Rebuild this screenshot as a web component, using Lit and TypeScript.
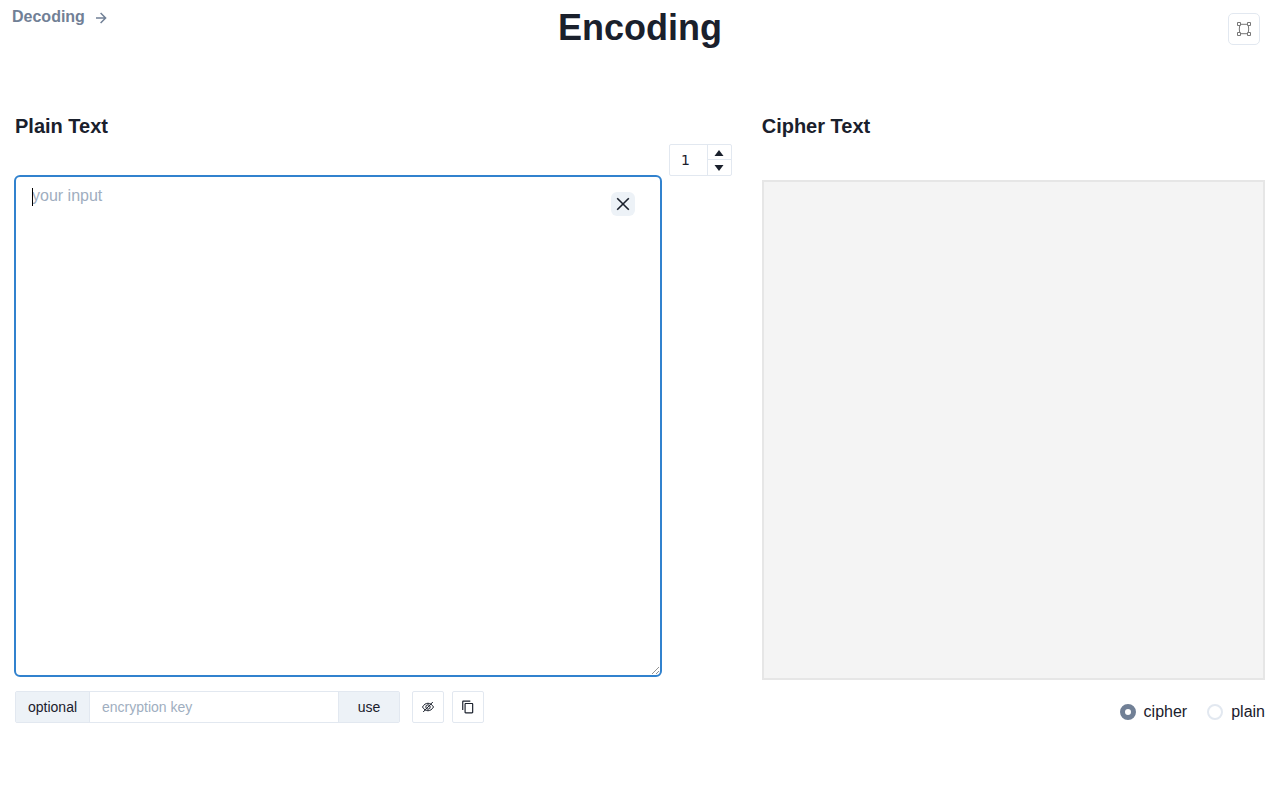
import { LitElement, html, css } from "lit";
import { customElement } from "lit/decorators.js";

@customElement("app-root")
export class AppRoot extends LitElement {
  static styles = css`
    :host {
      display: block;
      height: 800px;
      overflow: hidden;
      background: #fff;
      color: #1a202c;
      font: 16px/24px "Liberation Sans", Arial, sans-serif;
    }
    * { box-sizing: border-box; }
    svg { display: block; flex: none; }
    .header {
      display: grid;
      grid-template-columns: 1fr auto 1fr;
      align-items: start;
      height: 111px;
      padding: 5px 20px 0 12px;
    }
    .nav {
      display: flex;
      align-items: center;
      gap: 11px;
      color: #718096;
      font-weight: 700;
    }
    .nav svg { margin-top: 2px; }
    h1 { margin: 0 -4px 0 4px; font-size: 36px; line-height: 45px; }
    h2 { margin: 0; font-size: 20px; line-height: 30px; }
    .square {
      display: flex;
      align-items: center;
      justify-content: center;
      width: 32px;
      height: 32px;
      border: 1px solid #e2e8f0;
      background: #fff;
    }
    .full { justify-self: end; margin-top: 8px; border-radius: 5px; color: #777; }
    .main {
      display: grid;
      grid-template-columns: 717px 503.3px;
      gap: 29.7px;
      padding: 0 15px;
    }
    .stepper {
      display: grid;
      grid-template-columns: 37px 24px;
      width: 63px;
      height: 32px;
      margin: 3px 0 0 auto;
      border: 1px solid #e2e8f0;
      border-radius: 2px;
      font: 14px/30px "DejaVu Sans", sans-serif;
    }
    .value { padding-left: 11px; }
    .arrows { display: grid; grid-template-rows: 14px 16px; border-left: 1px solid #e2e8f0; }
    .arrows span { display: flex; align-items: center; justify-content: center; padding: 2px 1px 0 0; }
    .arrows span + span { border-top: 1px solid #e2e8f0; padding: 0 1px 0 0; }
    .editor {
      position: relative;
      width: 648px;
      height: 502px;
      margin: -1px 0 0 -1px;
      padding: 7px 16px;
      border: 2px solid #3182ce;
      border-radius: 6px;
      color: #a0aec0;
    }
    .caret { position: absolute; left: 16px; top: 11px; width: 1px; height: 18px; background: #000; }
    .clear {
      position: absolute;
      right: 25px;
      top: 15px;
      display: flex;
      align-items: center;
      justify-content: center;
      width: 24px;
      height: 24px;
      border-radius: 6px;
      background: #edf2f7;
      color: #1a202c;
    }
    .grip { position: absolute; right: 0; bottom: 0; }
    .tools { display: flex; margin-top: 14px; font-size: 14px; line-height: 30px; }
    .group { display: flex; width: 385px; height: 32px; margin-right: 12px; border: 1px solid #e2e8f0; border-radius: 2px; }
    .optional { width: 74px; background: #edf2f7; padding-left: 12px; border-right: 1px solid #e2e8f0; }
    .key { flex: 1; padding-left: 12px; color: #a0aec0; }
    .use { width: 61px; text-align: center; background: #edf2f7; border-left: 1px solid #e2e8f0; }
    .tools .square { border-radius: 2px; margin-right: 8px; }
    .output { height: 500px; margin-top: 39px; border: 2px solid #e6e6e6; background: #f4f4f4; }
    .radios { display: flex; justify-content: flex-end; margin-top: 20px; gap: 20px; }
    .radio { display: flex; align-items: center; gap: 8px; }
    .dot { width: 16px; height: 16px; border: 2px solid #e2e8f0; border-radius: 50%; }
    .on { border: 5px solid #718096; }
  `;

  render() {
    return html`
      <div class="header">
        <div class="nav">
          <span>Decoding</span>
          <svg width="11" height="12" viewBox="0 0 11 12" fill="none" stroke="currentColor" stroke-width="1.5"><path d="M0 6h9.500M4.600 1L9.600 6l-5 5"></path></svg>
        </div>
        <h1>Encoding</h1>
        <div class="square full">
          <svg width="16" height="16" viewBox="0 0 16 16" fill="none" stroke="currentColor" stroke-width="1">
            <path d="M1.500 1.500h3v3h-3zM11.500 1.500h3v3h-3zM1.500 11.500h3v3h-3zM11.500 11.500h3v3h-3zM4.500 3.300h7M4.500 12.700h7M3.700 4.500Q2.900 8 3.700 11.500M12.300 4.500Q13.100 8 12.300 11.500"></path>
          </svg>
        </div>
      </div>
      <div class="main">
        <div>
          <h2>Plain Text</h2>
          <div class="stepper">
            <div class="value">1</div>
            <div class="arrows">
              <span><svg width="10" height="6" viewBox="0 0 10 6"><path fill="currentColor" d="M5 0l4.500 6h-9z"></path></svg></span>
              <span><svg width="10" height="6" viewBox="0 0 10 6"><path fill="currentColor" d="M5 6L.5 0h9z"></path></svg></span>
            </div>
          </div>
          <div class="editor">
            your input
            <div class="caret"></div>
            <div class="clear">
              <svg width="14" height="14" viewBox="0 0 14 14" fill="none" stroke="currentColor" stroke-width="1.6"><path d="M1.200 1.200l11.600 11.600M12.800 1.200L1.200 12.800"></path></svg>
            </div>
            <svg class="grip" width="9" height="9" viewBox="0 0 9 9" fill="none" stroke="#777" stroke-width=".8"><path d="M1 8l7-7M5 8l3-3"></path></svg>
          </div>
          <div class="tools">
            <div class="group">
              <div class="optional">optional</div>
              <div class="key">encryption key</div>
              <div class="use">use</div>
            </div>
            <div class="square">
              <svg width="14" height="14" viewBox="0 0 14 14" fill="none" stroke="currentColor" stroke-width="1"><path d="M1.500 7c2.800-5 8.200-5 11 0-2.800 5-8.200 5-11 0z"></path><circle cx="7" cy="7" r="2.200"></circle><path d="M2.200 12L11.800 2"></path></svg>
            </div>
            <div class="square">
              <svg width="14" height="14" viewBox="0 0 24 24" fill="currentColor"><path d="M16 1H4c-1.100 0-2 .9-2 2v14h2V3h12V1zm3 4H8c-1.100 0-2 .9-2 2v14c0 1.100.9 2 2 2h11c1.100 0 2-.9 2-2V7c0-1.100-.9-2-2-2zm0 16H8V7h11v14z"></path></svg>
            </div>
          </div>
        </div>
        <div>
          <h2>Cipher Text</h2>
          <div class="output"></div>
          <div class="radios">
            <div class="radio"><span class="dot on"></span><span>cipher</span></div>
            <div class="radio"><span class="dot"></span><span>plain</span></div>
          </div>
        </div>
      </div>
    `;
  }
}
